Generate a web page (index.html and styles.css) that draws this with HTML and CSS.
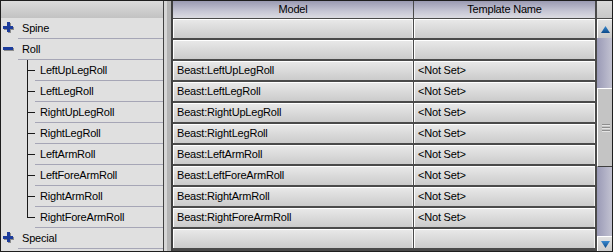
FILE: index.html
```html
<!DOCTYPE html>
<html>
<head>
<meta charset="utf-8">
<link rel="stylesheet" href="styles.css">
</head>
<body>
<div class="frame">
  <div class="tree">
    <div class="tree-head"></div>
    <div class="row">
      <span class="exp"><svg width="12" height="12" viewBox="0 0 12 12"><rect x="5" y="1" width="3" height="10" fill="#8c8c8c"/><rect x="1" y="5" width="10" height="3" fill="#8c8c8c"/><rect x="4" y="0" width="3" height="10" fill="#1c3c9c"/><rect x="0" y="4" width="10" height="3" fill="#1c3c9c"/></svg></span>
      <span class="label">Spine</span>
    </div>
    <div class="row">
      <span class="exp"><svg width="12" height="12" viewBox="0 0 12 12"><rect x="1" y="5" width="10" height="3" fill="#8c8c8c"/><rect x="0" y="4" width="10" height="3" fill="#1c3c9c"/></svg></span>
      <span class="label">Roll</span>
    </div>
    <div class="row child"><span class="indent"></span><span class="twig"><span class="arm"></span></span><span class="label">LeftUpLegRoll</span></div>
    <div class="row child"><span class="indent"></span><span class="twig"><span class="arm"></span></span><span class="label">LeftLegRoll</span></div>
    <div class="row child"><span class="indent"></span><span class="twig"><span class="arm"></span></span><span class="label">RightUpLegRoll</span></div>
    <div class="row child"><span class="indent"></span><span class="twig"><span class="arm"></span></span><span class="label">RightLegRoll</span></div>
    <div class="row child"><span class="indent"></span><span class="twig"><span class="arm"></span></span><span class="label">LeftArmRoll</span></div>
    <div class="row child"><span class="indent"></span><span class="twig"><span class="arm"></span></span><span class="label">LeftForeArmRoll</span></div>
    <div class="row child"><span class="indent"></span><span class="twig"><span class="arm"></span></span><span class="label">RightArmRoll</span></div>
    <div class="row child last"><span class="indent"></span><span class="twig"><span class="arm"></span></span><span class="label">RightForeArmRoll</span></div>
    <div class="row">
      <span class="exp"><svg width="12" height="12" viewBox="0 0 12 12"><rect x="5" y="1" width="3" height="10" fill="#8c8c8c"/><rect x="1" y="5" width="10" height="3" fill="#8c8c8c"/><rect x="4" y="0" width="3" height="10" fill="#1c3c9c"/><rect x="0" y="4" width="10" height="3" fill="#1c3c9c"/></svg></span>
      <span class="label">Special</span>
    </div>
  </div>
  <div class="splitter"></div>
  <div class="grid">
    <div class="ghead"><div class="hc model">Model</div><div class="hc tmpl">Template Name</div></div>
    <div class="grow"><div class="cell model"></div><div class="cell tmpl"></div></div>
    <div class="grow"><div class="cell model"></div><div class="cell tmpl"></div></div>
    <div class="grow"><div class="cell model">Beast:LeftUpLegRoll</div><div class="cell tmpl">&lt;Not Set&gt;</div></div>
    <div class="grow"><div class="cell model">Beast:LeftLegRoll</div><div class="cell tmpl">&lt;Not Set&gt;</div></div>
    <div class="grow"><div class="cell model">Beast:RightUpLegRoll</div><div class="cell tmpl">&lt;Not Set&gt;</div></div>
    <div class="grow"><div class="cell model">Beast:RightLegRoll</div><div class="cell tmpl">&lt;Not Set&gt;</div></div>
    <div class="grow"><div class="cell model">Beast:LeftArmRoll</div><div class="cell tmpl">&lt;Not Set&gt;</div></div>
    <div class="grow"><div class="cell model">Beast:LeftForeArmRoll</div><div class="cell tmpl">&lt;Not Set&gt;</div></div>
    <div class="grow"><div class="cell model">Beast:RightArmRoll</div><div class="cell tmpl">&lt;Not Set&gt;</div></div>
    <div class="grow"><div class="cell model">Beast:RightForeArmRoll</div><div class="cell tmpl">&lt;Not Set&gt;</div></div>
    <div class="grow"><div class="cell model"></div><div class="cell tmpl"></div></div>
  </div>
  <div class="scroll">
    <div class="corner"></div>
    <div class="sbtn up"><svg width="9" height="7" viewBox="0 0 9 7"><defs><linearGradient id="ga" x1="0" y1="0" x2="0" y2="1"><stop offset="0" stop-color="#3a8ad0"/><stop offset="1" stop-color="#0c4a8a"/></linearGradient></defs><polygon points="4.5,0 9,7 0,7" fill="url(#ga)"/></svg></div>
    <div class="track">
      <div class="gap-top"></div>
      <div class="thumb"><span class="grip"></span><span class="grip"></span><span class="grip"></span></div>
      <div class="gap-bottom"></div>
    </div>
    <div class="sbtn down"><svg width="9" height="7" viewBox="0 0 9 7"><defs><linearGradient id="gb" x1="0" y1="0" x2="0" y2="1"><stop offset="0" stop-color="#3a8ad0"/><stop offset="1" stop-color="#0c4a8a"/></linearGradient></defs><polygon points="0,0 9,0 4.5,7" fill="url(#gb)"/></svg></div>
  </div>
</div>
</body>
</html>
```

FILE: styles.css
```css
* { box-sizing: border-box; }
html, body { margin: 0; padding: 0; background: #d4d0c8; }
body {
  font-family: "Liberation Sans", Arial, sans-serif;
  font-size: 11px;
  letter-spacing: -0.2px;
  color: #000;
}
.frame {
  width: 613px;
  height: 252px;
  border: 1px solid #1e1e1e;
  display: flex;
  overflow: hidden;
  background: #4a4a4a;
}

/* tree panel */
.tree {
  width: 162px;
  flex: none;
  background: #e0e0e0;
  display: flex;
  flex-direction: column;
}
.tree-head {
  height: 17px;
  flex: none;
  background: linear-gradient(#dcdcdc, #c2c2c2);
}
.row {
  height: 21px;
  flex: none;
  display: flex;
}
.exp {
  width: 17px;
  flex: none;
  display: flex;
  align-items: center;
  padding-left: 2px;
  padding-bottom: 1px;
}
.label {
  flex: 1;
  height: 21px;
  line-height: 20px;
  border-bottom: 1px solid #a6a6b6;
  padding-left: 4px;
  white-space: nowrap;
}
.child .indent { width: 26px; flex: none; }
.child .twig {
  width: 8px;
  height: 21px;
  flex: none;
  display: block;
  border-left: 1px solid #1a1a1a;
}
.child.last .twig { height: 11px; }
.child .arm {
  display: block;
  height: 11px;
  border-bottom: 1px solid #1a1a1a;
}
.child .label { padding-left: 5px; }

/* splitter */
.splitter {
  width: 10px;
  flex: none;
  border-left: 1px solid #404040;
  border-right: 2px solid #404040;
  background: linear-gradient(90deg, #d6d6d6 0, #d6d6d6 3px, #b4b4b4 3px, #b4b4b4 100%);
}

/* grid */
.grid {
  width: 423px;
  flex: none;
  display: flex;
  flex-direction: column;
  background: #4a4a4a;
}
.ghead {
  height: 17px;
  flex: none;
  display: flex;
  gap: 1px;
  margin-bottom: 1px;
}
.hc {
  height: 17px;
  line-height: 17px;
  text-align: center;
  background: linear-gradient(#9a9ab2, #c6c6d4 60%, #dcdce2);
}
.model { width: 240px; flex: none; }
.tmpl { width: 181px; flex: none; }
.grow {
  height: 21px;
  flex: none;
  display: flex;
  gap: 1px;
}
.cell {
  height: 19px;
  line-height: 17px;
  border-top: 1px solid #fff;
  border-left: 1px solid #fff;
  border-right: 1px solid #f4f4f4;
  padding-left: 3px;
  background: linear-gradient(#e8e8e8, #cbcbcb);
  white-space: nowrap;
}

/* scrollbar */
.scroll {
  width: 16px;
  flex: none;
  margin-left: 1px;
  display: flex;
  flex-direction: column;
  background: #4a4a4a;
}
.corner {
  height: 17px;
  flex: none;
  margin-bottom: 1px;
  background: linear-gradient(#dadada, #c8c8c8);
}
.sbtn {
  flex: none;
  display: flex;
  align-items: center;
  justify-content: center;
  border-top: 1px solid #fff;
  border-left: 1px solid #fff;
  background: linear-gradient(#e2e2e2, #cacaca);
}
.sbtn.up { height: 19px; }
.sbtn.down { height: 15px; }
.track {
  height: 198px;
  flex: none;
  display: flex;
  flex-direction: column;
  background: linear-gradient(90deg, #9a9ab6, #b4b4c8 60%, #c4c4d2);
}
.gap-top { height: 50px; flex: none; }
.gap-bottom { flex: 1; }
.thumb {
  height: 79px;
  flex: none;
  border-top: 1px solid #fff;
  border-left: 1px solid #fff;
  border-bottom: 1px solid #404040;
  background: #c4c4c4;
  display: flex;
  flex-direction: column;
  align-items: center;
  justify-content: center;
  gap: 1px;
}
.grip {
  width: 8px;
  height: 2px;
  border-top: 1px solid #8e8e8e;
  border-bottom: 1px solid #e4e4e4;
}
```
